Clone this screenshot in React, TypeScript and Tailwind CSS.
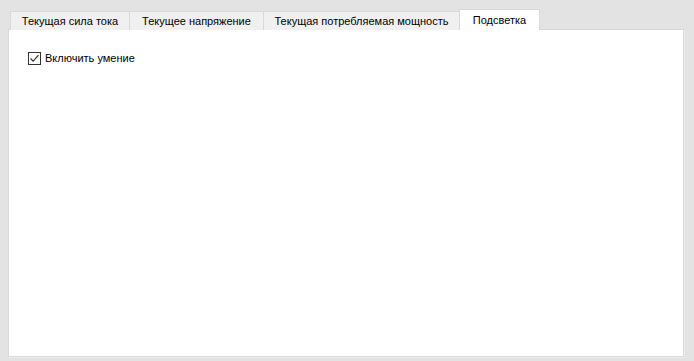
import React from "react";

const tabs = [
  { label: "Текущая сила тока", w: 119 },
  { label: "Текущее напряжение", w: 134 },
  { label: "Текущая потребляемая мощность", w: 196 },
];

export default function App() {
  return (
    <div
      className="w-[694px] h-[361px] bg-[#e3e3e3] flex flex-col pt-[9px] pl-[8px] pr-[10px] pb-[4px]"
      style={{ fontFamily: '"Liberation Sans", Arial, sans-serif' }}
    >
      <div className="flex items-end h-[21px] pl-[2px] relative z-10 -mb-px">
        {tabs.map((t) => (
          <div
            key={t.label}
            className="shrink-0 whitespace-nowrap h-[19px] flex items-center justify-center bg-[#f0f0f0] border-t border-l border-[#d9d9d9] text-[11px] text-black leading-none pt-px"
            style={{ width: t.w }}
          >
            {t.label}
          </div>
        ))}
        <div className="shrink-0 whitespace-nowrap h-[21px] w-[81px] flex items-center justify-center bg-white border-t border-l border-r border-[#d9d9d9] text-[11px] text-black leading-none pt-px">
          Подсветка
        </div>
      </div>
      <div className="flex-1 bg-white border border-[#d9d9d9] shadow-[1px_1px_0_#ececec] px-[19px] pt-[22px]">
        <label className="flex items-center gap-[4px] text-[11px] text-black leading-none">
          <span className="w-[13px] h-[13px] border border-[#333] bg-white flex items-center justify-center">
            <svg width="11" height="11" viewBox="0 0 11 11">
              <path d="M1.5 5.5 L4.2 8.2 L9.5 2.2" fill="none" stroke="#333" strokeWidth="1.2" />
            </svg>
          </span>
          Включить умение
        </label>
      </div>
    </div>
  );
}
